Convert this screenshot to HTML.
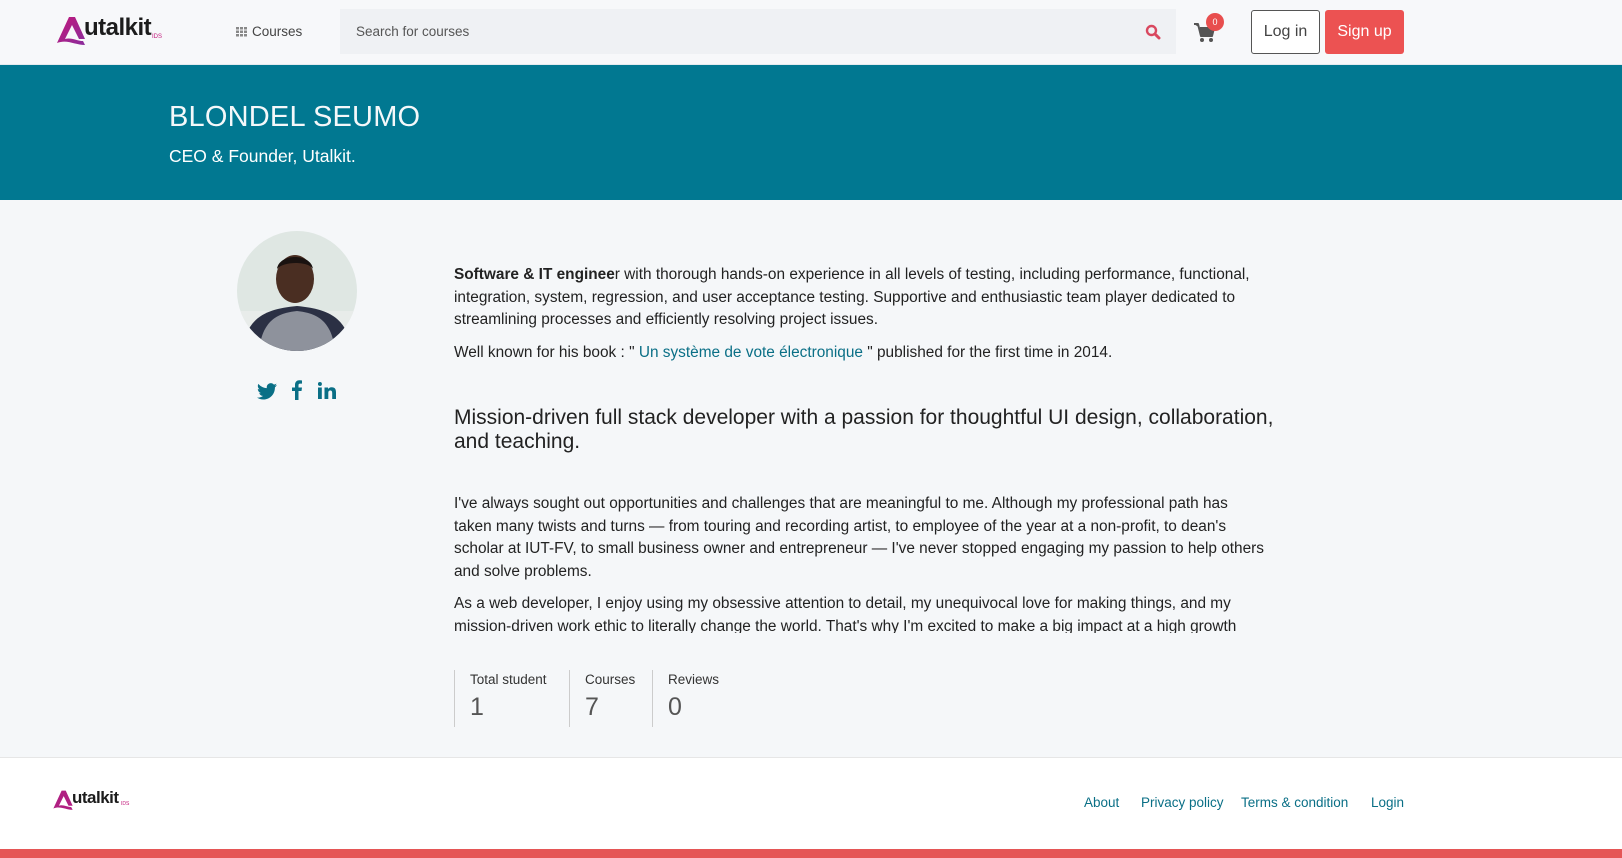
<!DOCTYPE html>
<html><head><meta charset="utf-8"><style>
*{margin:0;padding:0;box-sizing:border-box}
body{width:1622px;height:858px;overflow:hidden;background:#f5f7f9;font-family:"Liberation Sans",sans-serif;color:#222;position:relative}
.abs{position:absolute}
header{position:absolute;left:0;top:0;width:1622px;height:65px;background:#f7f8fa;border-bottom:1px solid #e4eaee}
.logo{font-weight:bold;color:#1c1c1c;font-size:24px;letter-spacing:-0.5px}
.teal{left:0;top:65px;width:1622px;height:135px;background:#017891}
p.t{font-size:15.4px;line-height:22.5px;color:#222;white-space:nowrap}
a{color:#0a6f86;text-decoration:none}
.stat{top:670px;height:57px;border-left:1px solid #ccc;padding-left:15px}
.stat .l{font-size:13.5px;color:#333;margin-top:2px}
.stat .v{font-size:25px;color:#555;margin-top:6px;font-weight:300}
footer{position:absolute;left:0;top:757px;width:1622px;height:92px;background:#fff;border-top:1px solid #e6e6e6}
.fl{font-size:13.5px;color:#0a6f86;top:795px}
</style></head><body>
<header>
  <svg class="abs" style="left:55px;top:15px" width="32" height="30" viewBox="0 0 32 30"><defs><linearGradient id="g" x1="0" y1="0" x2="1" y2="1"><stop offset="0" stop-color="#c2187a"/><stop offset="1" stop-color="#8a2d9c"/></linearGradient></defs><path d="M2 28 L14 2 L20 2 L30 24 L24 24 L17 10 L10 24 C16 22 22 26 28 26 L30 30 C20 30 12 24 2 28Z" fill="url(#g)"/></svg>
  <div class="abs logo" style="left:84px;top:14px">utalkit</div>
  <div class="abs" style="left:152px;top:34px;font-size:6px;color:#c2187a">IDS</div>
  <svg class="abs" style="left:236px;top:27px" width="11" height="10"><g fill="#888"><rect x="0" y="0" width="3" height="2.5"/><rect x="4" y="0" width="3" height="2.5"/><rect x="8" y="0" width="3" height="2.5"/><rect x="0" y="3.5" width="3" height="2.5"/><rect x="4" y="3.5" width="3" height="2.5"/><rect x="8" y="3.5" width="3" height="2.5"/><rect x="0" y="7" width="3" height="2.5"/><rect x="4" y="7" width="3" height="2.5"/><rect x="8" y="7" width="3" height="2.5"/></g></svg>
  <div class="abs" style="left:252px;top:24px;font-size:13.5px;color:#444">Courses</div>
  <div class="abs" style="left:340px;top:9px;width:836px;height:45px;background:#eff1f4"></div>
  <div class="abs" style="left:356px;top:24px;font-size:13.5px;color:#555">Search for courses</div>
  <svg class="abs" style="left:1145px;top:24px" width="16" height="16" viewBox="0 0 16 16"><circle cx="6.5" cy="6.5" r="4.5" fill="none" stroke="#d9485f" stroke-width="2.4"/><path d="M10 10 L14 14" stroke="#d9485f" stroke-width="3" stroke-linecap="round"/></svg>
  <svg class="abs" style="left:1194px;top:23px" width="22" height="20" viewBox="0 0 22 20"><path d="M0 1 H4 L7 13 H18 L20 5 H6" fill="#555" stroke="#555" stroke-width="2" stroke-linejoin="round"/><circle cx="8" cy="17" r="2" fill="#555"/><circle cx="17" cy="17" r="2" fill="#555"/></svg>
  <div class="abs" style="left:1206px;top:13px;width:18px;height:18px;border-radius:50%;background:#e84e4e;color:#fff;font-size:9px;text-align:center;line-height:18px">0</div>
  <div class="abs" style="left:1251px;top:10px;width:69px;height:44px;border:1px solid #555;border-radius:3px;background:#fff;font-size:16px;color:#444;text-align:center;line-height:42px">Log in</div>
  <div class="abs" style="left:1325px;top:10px;width:79px;height:44px;border-radius:3px;background:#ec5252;font-size:16px;color:#fff;text-align:center;line-height:44px">Sign up</div>
</header>
<div class="abs teal"></div>
<div class="abs" style="left:169px;top:101px;font-size:29px;color:#f4f8fa;letter-spacing:0.2px">BLONDEL SEUMO</div>
<div class="abs" style="left:169px;top:146px;font-size:17.5px;color:#fff">CEO &amp; Founder, Utalkit.</div>

<svg class="abs" style="left:237px;top:231px" width="120" height="120" viewBox="0 0 120 120"><defs><clipPath id="c"><circle cx="60" cy="60" r="60"/></clipPath></defs><g clip-path="url(#c)"><rect width="120" height="120" fill="#dfe7e3"/><rect y="80" width="120" height="40" fill="#e8ecea"/><path d="M5 120 C10 85 30 78 60 75 C90 78 110 85 115 120Z" fill="#2b3044"/><path d="M22 120 C25 90 40 82 60 80 C80 82 95 90 98 120Z" fill="#8e929c"/><ellipse cx="58" cy="48" rx="19" ry="24" fill="#4a2e22"/><path d="M40 38 C42 22 74 22 76 38 C72 30 46 30 40 38Z" fill="#1a1210"/></g></svg>

<svg class="abs" style="left:257px;top:383px" width="20" height="17" viewBox="0 0 24 20"><path d="M24 2.4c-.9.4-1.8.7-2.8.8 1-.6 1.8-1.6 2.2-2.7-1 .6-2 1-3.1 1.2C19.3.7 18 0 16.6 0c-2.7 0-4.9 2.2-4.9 4.9 0 .4 0 .8.1 1.1C7.7 5.8 4.1 3.900 1.7.9c-.4.7-.7 1.6-.7 2.5 0 1.7.9 3.2 2.2 4.1-.8 0-1.600-.2-2.2-.6v.1c0 2.4 1.7 4.4 3.900 4.8-.4.1-.8.2-1.3.2-.3 0-.6 0-.9-.1.6 2 2.4 3.4 4.6 3.4-1.7 1.3-3.8 2.1-6.1 2.1H0c2.2 1.4 4.8 2.2 7.5 2.2 9.1 0 14-7.5 14-14v-.6c1-.7 1.8-1.6 2.5-2.6z" fill="#0a6f86"/></svg>
<svg class="abs" style="left:292px;top:380px" width="10" height="20" viewBox="0 0 10 20"><path d="M6.5 20V11h3l.5-3.5H6.5V5.3c0-1 .3-1.7 1.7-1.7H10V.5C9.7.4 8.6.3 7.4.3 4.8.3 3 1.9 3 4.8v2.7H0V11h3v9z" fill="#0a6f86"/></svg>
<svg class="abs" style="left:318px;top:382px" width="18" height="17" viewBox="0 0 18 17"><rect x="0" y="5.5" width="3.8" height="11.5" fill="#0a6f86"/><circle cx="1.9" cy="2" r="2" fill="#0a6f86"/><path d="M6.5 5.5H10v1.6c.6-1 1.8-1.9 3.6-1.9 3.4 0 4.4 2 4.4 5.3V17h-3.8v-5.7c0-1.5-.2-2.8-1.9-2.8s-2 1.2-2 2.7V17H6.5z" fill="#0a6f86"/></svg>

<div class="abs" style="left:454px;top:264px">
<p class="t"><b>Software &amp; IT enginee</b>r with thorough hands-on experience in all levels of testing, including performance, functional,<br>integration, system, regression, and user acceptance testing. Supportive and enthusiastic team player dedicated to<br>streamlining processes and efficiently resolving project issues.</p>
<p class="t" style="margin-top:10px">Well known for his book : " <a>Un système de vote électronique</a> " published for the first time in 2014.</p>
</div>
<div class="abs" style="left:454px;top:406px;font-size:21px;line-height:24px;color:#222;white-space:nowrap">Mission-driven full stack developer with a passion for thoughtful UI design, collaboration,<br>and teaching.</div>
<div class="abs" style="left:454px;top:493px;height:140px;overflow:hidden">
<p class="t">I've always sought out opportunities and challenges that are meaningful to me. Although my professional path has<br>taken many twists and turns — from touring and recording artist, to employee of the year at a non-profit, to dean's<br>scholar at IUT-FV, to small business owner and entrepreneur — I've never stopped engaging my passion to help others<br>and solve problems.</p>
<p class="t" style="margin-top:10px">As a web developer, I enjoy using my obsessive attention to detail, my unequivocal love for making things, and my<br>mission-driven work ethic to literally change the world. That's why I'm excited to make a big impact at a high growth</p>
</div>

<div class="abs stat" style="left:454px;width:115px"><div class="l">Total student</div><div class="v">1</div></div>
<div class="abs stat" style="left:569px;width:83px"><div class="l">Courses</div><div class="v">7</div></div>
<div class="abs stat" style="left:652px;width:100px"><div class="l">Reviews</div><div class="v">0</div></div>

<footer></footer>
<svg class="abs" style="left:52px;top:789px" width="22" height="21" viewBox="0 0 32 30"><path d="M2 28 L14 2 L20 2 L30 24 L24 24 L17 10 L10 24 C16 22 22 26 28 26 L30 30 C20 30 12 24 2 28Z" fill="#b01f82"/></svg>
<div class="abs logo" style="left:72px;top:788px;font-size:17px">utalkit</div>
<div class="abs" style="left:121px;top:801px;font-size:5px;color:#c2187a">IDS</div>
<div class="abs fl" style="left:1084px">About</div>
<div class="abs fl" style="left:1141px">Privacy policy</div>
<div class="abs fl" style="left:1241px">Terms &amp; condition</div>
<div class="abs fl" style="left:1371px">Login</div>
<div class="abs" style="left:0;top:849px;width:1622px;height:9px;background:#e55656"></div>
</body></html>
